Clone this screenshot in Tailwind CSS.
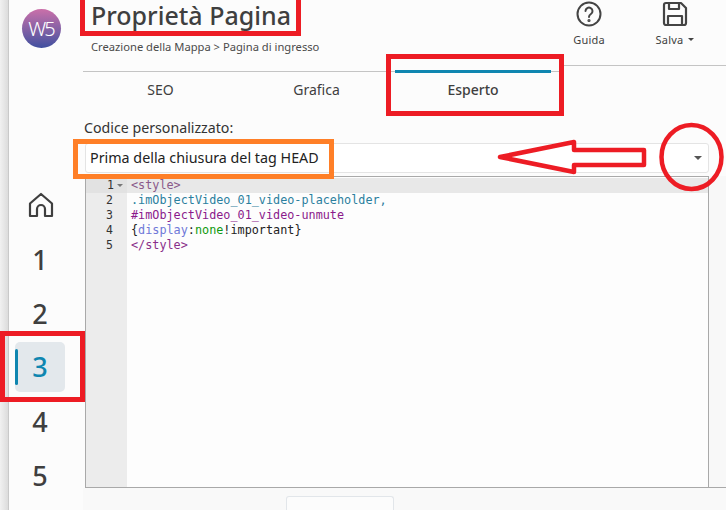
<!DOCTYPE html>
<html lang="en">
<head>
    <meta charset="UTF-8">
    <title>Proprietà Pagina</title>
    <script src="https://cdn.jsdelivr.net/npm/@tailwindcss/browser@4"></script>
</head>
<body class="bg-[#fcfcfc]">
<div class="relative flex h-[510px] w-[726px] overflow-hidden bg-[#fcfcfc] font-['Noto_Sans',sans-serif] text-[#3f3f3f]">

    <!-- window edge -->
    <div class="h-full w-[9px] shrink-0 border-r border-[#c9c9c9] bg-gradient-to-r from-[#f1f1f1] to-[#dcdcdc]"></div>

    <!-- sidebar -->
    <div class="flex h-full w-[74px] shrink-0 flex-col items-center">
        <div class="mt-[9px] ml-[-10px] flex h-[39px] w-[39px] items-center justify-center rounded-full bg-gradient-to-b from-[#cb6fa9] to-[#3f4f9f] text-[20px] leading-none tracking-[-2px] text-white font-light">W5</div>
        <div class="mt-[143px] ml-[-10px] flex h-[28px] items-center justify-center">
            <svg width="26" height="26" viewBox="0 0 26 26" fill="none" stroke="#3f3f3f" stroke-width="2.2" stroke-linejoin="round"><path d="M2 11.5 13 2l11 9.5V24h-7v-7a4 4 0 0 0-8 0v7H2z"/></svg>
        </div>
        <div class="mt-[13px] ml-[-12px] flex w-[50px] flex-col items-center text-[27px] font-medium">
            <div class="flex h-[54px] items-center pt-[2px]">1</div>
            <div class="flex h-[54px] items-center pt-[2px]">2</div>
            <div class="relative my-[2px] flex h-[50px] w-[50px] items-center justify-center rounded-[5px] bg-[#e3e8ec] text-[#0f86b0]">
                <span class="absolute left-0 top-[7px] h-[36px] w-[3px] rounded-full bg-[#0f86b0]"></span>
                3
            </div>
            <div class="flex h-[54px] items-center pt-[2px]">4</div>
            <div class="flex h-[54px] items-center pt-[2px]">5</div>
        </div>
    </div>

    <!-- main -->
    <div class="flex h-full w-[643px] shrink-0 flex-col">
        <div class="flex items-start">
            <div class="h-[72px] w-[480px] border-b border-[#c4c4c4] pl-[8px]">
                <h1 class="text-[25px] leading-[31px] font-medium">Proprietà Pagina</h1>
                <p class="mt-[8px] text-[11.2px] leading-[15px] text-[#4a4a4a]">Creazione della Mappa &gt; Pagina di ingresso</p>
            </div>
            <div class="relative h-[66px] w-[163px] border-b border-[#c4c4c4]">
                <div class="absolute left-[-19px] top-0 flex w-[90px] flex-col items-center">
                    <svg class="mt-[1px]" width="26" height="26" viewBox="0 0 26 26" fill="none" stroke="#444" stroke-width="2"><circle cx="13" cy="13" r="11.5"/><path d="M9.5 10a3.5 3.5 0 1 1 5.4 3c-1.2.8-1.9 1.3-1.9 3" stroke-linecap="round"/><circle cx="13" cy="19.5" r=".6" fill="#444"/></svg>
                    <span class="mt-[5px] text-[11px] leading-[15px] tracking-[0.2px]">Guida</span>
                </div>
                <div class="absolute left-[67px] top-0 flex w-[90px] flex-col items-center">
                    <svg class="mt-[1px]" width="26" height="26" viewBox="0 0 26 26" fill="none" stroke="#444" stroke-width="2.2" stroke-linejoin="round"><path d="M2 4a2 2 0 0 1 2-2h15l5 5v15a2 2 0 0 1-2 2H4a2 2 0 0 1-2-2z"/><path d="M7 2v6h10V2M6 24v-9h14v9"/></svg>
                    <span class="mt-[5px] flex items-center gap-[5px] text-[11px] leading-[15px] tracking-[0.2px]">Salva <span class="h-0 w-0 border-x-[3px] border-t-[3px] border-x-transparent border-t-[#444]"></span></span>
                </div>
            </div>
        </div>

        <!-- tabs -->
        <div class="flex h-[36px] items-center text-[14px]">
            <div class="w-[155px] text-center">SEO</div>
            <div class="w-[157px] text-center">Grafica</div>
            <div class="relative flex h-full w-[156px] items-center justify-center font-medium">
                <span class="absolute left-0 top-[-2px] h-[3px] w-full bg-[#0f86b0]"></span>
                Esperto
            </div>
        </div>

        <div class="ml-[1px] mt-[10px] text-[14.2px] leading-[20px] text-[#333]">Codice personalizzato:</div>

        <!-- select -->
        <div class="ml-[2px] mt-[5px] flex h-[30px] w-[624px] items-center justify-between rounded-[3px] border border-[#e4e4e4] bg-white pl-[4px] pr-[6px] text-[14.3px] text-[#222]">
            <span>Prima della chiusura del tag HEAD</span>
            <span class="h-0 w-0 border-x-[4px] border-t-[4px] border-x-transparent border-t-[#555]"></span>
        </div>

        <!-- editor -->
        <div class="ml-[2px] mt-[3px] flex h-[314px] w-[641px] border-b border-[#a9a9a9]">
            <div class="flex h-full w-[624px] border-x border-t border-[#a9a9a9] bg-white">
                <div class="h-full w-[41px] bg-[#ececec] pt-[1px] font-['DejaVu_Sans_Mono',monospace] text-[11.5px] leading-[15px] text-[#333]">
                    <div class="flex h-[15px] items-center justify-end gap-[3px] bg-[#e2e2e2] pr-[4px]">1 <span class="h-0 w-0 border-x-[3px] border-t-[3px] border-x-transparent border-t-[#777]"></span></div>
                    <div class="pr-[14px] text-right">2</div>
                    <div class="pr-[14px] text-right">3</div>
                    <div class="pr-[14px] text-right">4</div>
                    <div class="pr-[14px] text-right">5</div>
                </div>
                <div class="min-w-0 flex-1 bg-[#fdfdfd] pt-[1px] font-['DejaVu_Sans_Mono',monospace] text-[11.8px] leading-[15px] text-[#222]">
                    <div class="h-[15px] bg-[#e8e8e8] pl-[4px] text-[#8a5a8a]">&lt;style&gt;</div>
                    <div class="pl-[4px] text-[#2b7f9e]">.imObjectVideo_01_video-placeholder,</div>
                    <div class="pl-[4px] text-[#8b1a8b]">#imObjectVideo_01_video-unmute</div>
                    <div class="pl-[4px]">{<span class="text-[#6f78d8]">display</span>:<span class="text-[#0f9a0f]">none</span>!important}</div>
                    <div class="pl-[4px] text-[#8a2f8a]">&lt;/style&gt;</div>
                </div>
            </div>
            <div class="h-full w-[17px] bg-[#f8f8f8]"></div>
        </div>

        <!-- bottom bar -->
        <div class="flex h-[22px] w-full bg-[#f9f9f9] pl-[203px] pt-[8px]">
            <div class="h-[14px] w-[108px] rounded-t-[3px] border-x border-t border-[#e2e6ea] bg-[#fcfcfc]"></div>
        </div>
    </div>

    <!-- annotations drawn over the screenshot -->
    <div class="absolute left-[80px] top-[-6px] h-[42px] w-[221px] border-[5px] border-[#ed1c24]"></div>
    <div class="absolute left-[386px] top-[54px] h-[62px] w-[178px] border-[5px] border-[#ed1c24]"></div>
    <div class="absolute left-[73px] top-[139px] h-[40px] w-[261px] border-[5px] border-[#ff7f27]"></div>
    <div class="absolute left-0 top-[331px] h-[71px] w-[85px] border-[5px] border-[#ed1c24]"></div>
    <svg class="absolute left-0 top-0" width="726" height="510" fill="none" stroke="#ed1c24" stroke-width="4.5" stroke-linejoin="round">
        <path d="M500 157 574 142v8h70v15h-70v7z"/>
        <ellipse cx="691.5" cy="157" rx="30" ry="32"/>
    </svg>
</div>
</body>
</html>
